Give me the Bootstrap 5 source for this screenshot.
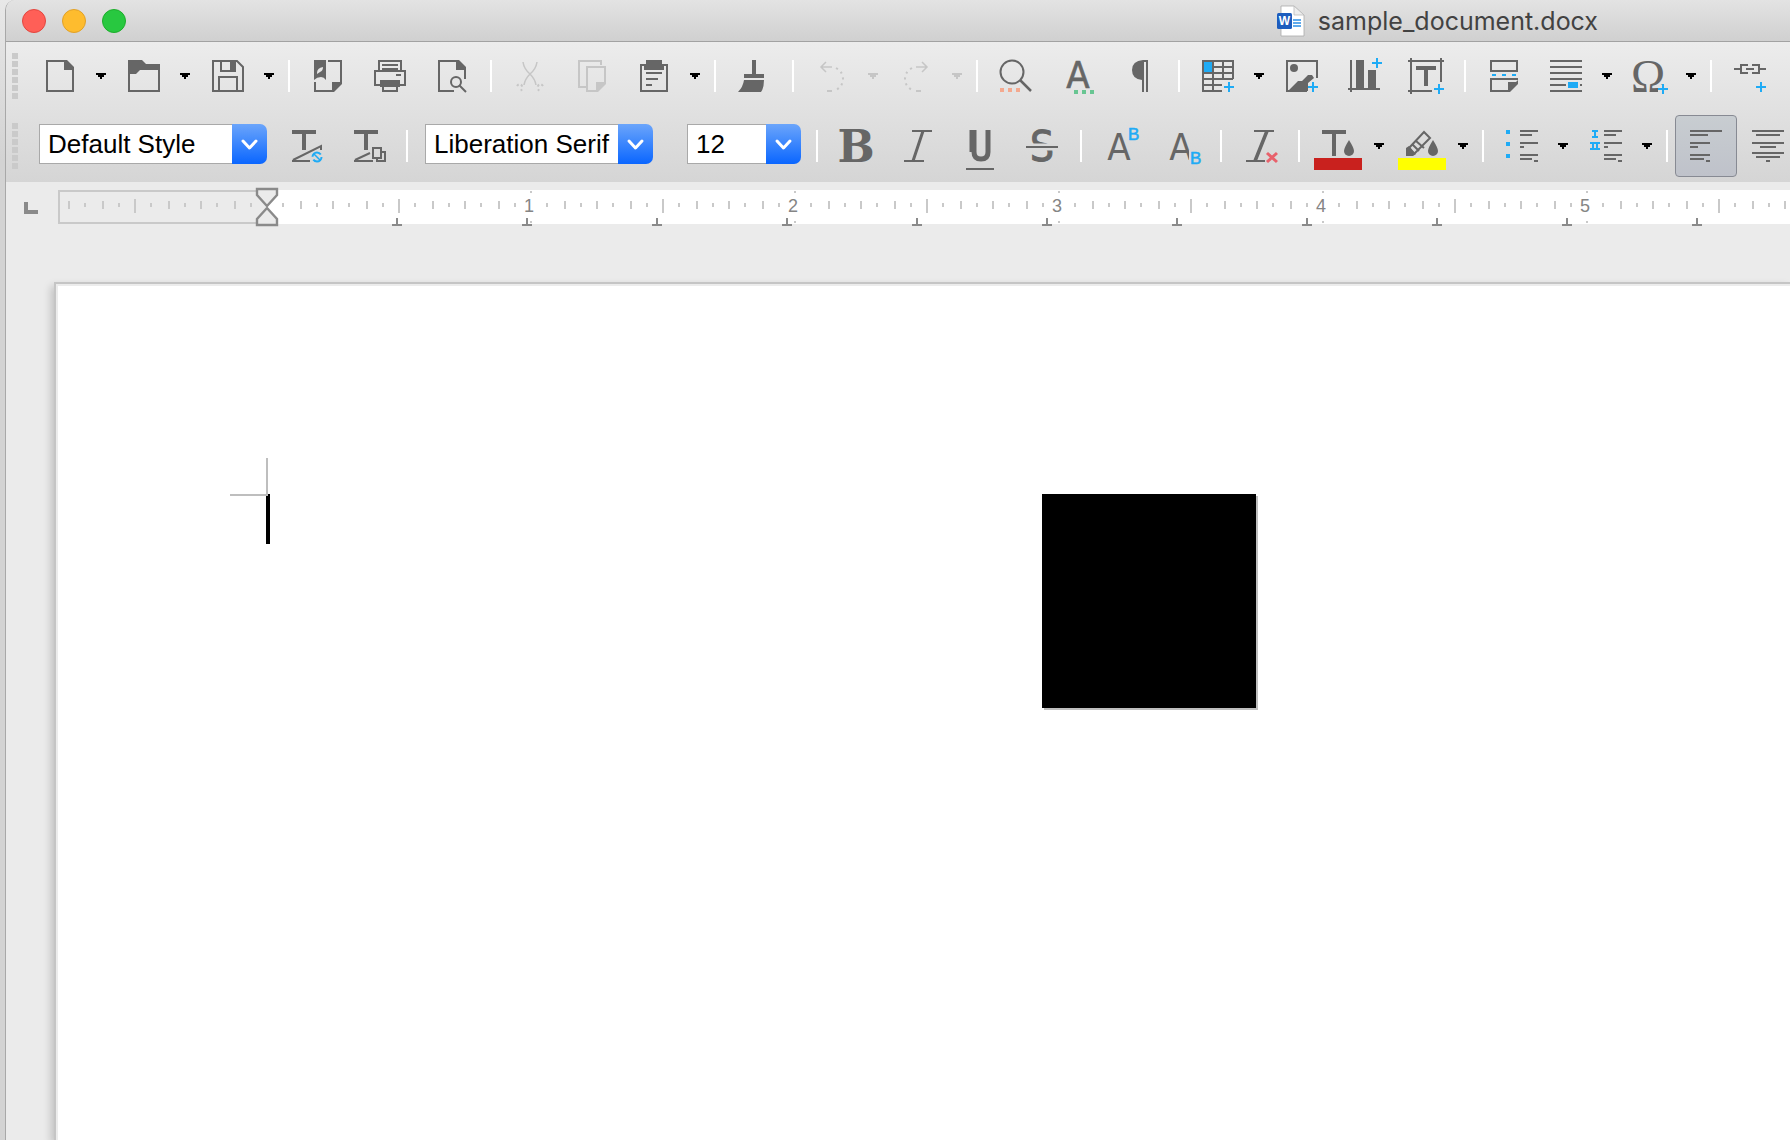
<!DOCTYPE html>
<html lang="en">
<head>
<meta charset="utf-8">
<meta name="viewport" content="width=device-width, initial-scale=1">
<title>sample_document.docx</title>
<link href="https://cdn.jsdelivr.net/npm/bootstrap@5.3.0/dist/css/bootstrap.min.css" rel="stylesheet">
<style>
:root{--ink:#666;--blue:#1fabf5;--panel:#ebebeb}
body{background:linear-gradient(#e8e8e8,#d3d3d3 160px);padding-left:5px;font-family:"Liberation Sans",Arial,sans-serif;overflow:hidden}
.win{min-height:100vh;border-left:1px solid #a8a8a8;border-top-left-radius:10px;background:var(--panel);overflow:hidden}
.titlebar{height:42px;background:linear-gradient(#e3e3e3,#d0d0d0);border-bottom:1px solid #a2a2a2;padding-left:16px;gap:16px}
.light{width:24px;height:24px;border-radius:50%;border:1px solid;padding:0}
.l-red{background:#ff5f57;border-color:#e2463f}
.l-yel{background:#febc2e;border-color:#e0a028}
.l-grn{background:#28c840;border-color:#1dad2b}
.doc-title{font-family:Inter,Roboto,sans-serif;font-size:25px;line-height:32px;color:#424242;padding-right:192px;gap:13px;white-space:nowrap}
.doc-title svg{flex:none}
.bars{background:linear-gradient(#ececec,#d5d5d5);height:140px;border-top-left-radius:8px}
.bar1{height:68px}
.bar2{height:72px}
.grip{width:6px;height:46px;margin:0 11px 0 6px;flex:none;background:repeating-linear-gradient(#cacaca 0 6px,transparent 6px 8px)}
.tb,.ar{border:1px solid transparent;background:none;padding:0;height:62px;flex:none;display:flex;align-items:center}
.tb{width:62px;justify-content:center;border-radius:4px}
.ar{width:22px}
.tb svg{width:48px;height:48px;overflow:visible;flex:none;stroke:var(--ink);fill:none;stroke-width:2}
.tb.active{background:linear-gradient(#c8cdd1,#bfc2ca);border:1px solid #878a93}
.tb .f{fill:var(--ink);stroke:none}
.tb .b{stroke:var(--blue)}
.tb .bf{fill:var(--blue);stroke:none}
.tb:disabled svg{stroke:#c6c6c6}
.tb:disabled .f{fill:#c6c6c6}
.tb text{font-family:"Liberation Sans",Arial,sans-serif;fill:var(--ink);stroke:none}
.tb .cap-a{font-family:"DejaVu Sans Condensed","DejaVu Sans",sans-serif;font-size:38px;text-anchor:middle}
.tb .cap-b{font-size:17px;fill:var(--blue);stroke:var(--blue);stroke-width:.6}
.ar svg{width:18px;height:10px;fill:#000}
.ar:disabled svg{fill:#c6c6c6}
.sep{width:2px;height:32px;margin:0 7px;background:#fff;flex:none}
.combo{flex:none;appearance:none;border:0;height:40px;width:228px;margin:0 8px 4px 10px;padding:0 36px 0 9px;font-size:26px;line-height:38px;color:#000;border-radius:0 7px 7px 0;
background:url("data:image/svg+xml,%3Csvg xmlns='http://www.w3.org/2000/svg' viewBox='0 0 35 40'%3E%3Cpath d='M11 17l6.500 7 6.500-7' fill='none' stroke='%23fff' stroke-width='3' stroke-linecap='round' stroke-linejoin='round'/%3E%3C/svg%3E") right/35px 40px no-repeat,linear-gradient(#6ba5fb,#0a66ff) right/35px 100% no-repeat,linear-gradient(#fff,#fff) 1px 1px/100% 38px no-repeat,#a9a9a9}
.combo-size{width:114px;margin-left:26px}
.ruler-row{height:44px;margin-top:8px}
.tabkind{width:52px;border:0;background:none;padding:12px 0 0 18px;flex:none;line-height:0;text-align:left}
.ruler{flex:1;height:40px;min-width:0;overflow:visible;margin-top:-2px}
.ruler text{font-size:18px;fill:#858585;text-anchor:middle;font-family:"Liberation Sans",Arial,sans-serif}
.sheet{margin:48px 0 0 48px;min-height:calc(100vh - 282px);border:solid #c5c5c5;border-width:2px 0 0 2px;box-shadow:inset 2px 2px 0 #ececec,-3px 4px 8px rgba(0,0,0,.18);background:#fff;padding:210px 0 0 210px}
.caret{width:4px;height:50px;background:#000;position:relative}
.caret::before{content:"";position:absolute;right:2px;bottom:48px;width:38px;height:38px;border:solid #bebebe;border-width:0 2px 2px 0}
.shape{width:214px;height:214px;background:#000;box-shadow:2px 2px 0 #bfbfbf;margin-left:772px}
</style>
<script src="https://cdn.jsdelivr.net/npm/bootstrap@5.3.0/dist/js/bootstrap.bundle.min.js"></script>
</head>
<body>
<div class="win">
<header class="titlebar d-flex align-items-center">
<button class="light l-red" aria-label="Close"></button>
<button class="light l-yel" aria-label="Minimize"></button>
<button class="light l-grn" aria-label="Zoom"></button>
<div class="doc-title d-flex align-items-center ms-auto">
<svg width="28" height="32" viewBox="0 0 28 32"><path d="M4 1H17L27 10V31H4z" fill="#fff" stroke="#aaa" stroke-width=".8"/><path d="M17 1V10H27z" fill="#eee" stroke="#bbb" stroke-width=".8"/><path d="M16 15h8M16 18h8M16 21h8" stroke="#2b8fe6" stroke-width="1.300"/><rect y="8" width="15" height="16" rx="1.500" fill="#1d5dbe"/><text x="7.500" y="20" font-family="Liberation Sans" font-weight="700" font-size="12" text-anchor="middle" fill="#fff">W</text></svg>
<span>sample_document.docx</span>
</div>
</header>
<div class="bars">
<div class="bar1 d-flex align-items-center" role="toolbar" aria-label="Standard">
<span class="grip"></span>
<button class="tb" aria-label="New"><svg viewBox="-24 -24 48 48"><path d="M5-15H-13V15H13V-7"/><path class="f" d="M4-16H7L14-9V-6H4z"/></svg></button><button class="ar" aria-label="New options"><svg viewBox="0 0 18 10"><path d="M4 2H14V4H12V6H10V8H8V6H6V4H4z"/></svg></button>
<button class="tb" aria-label="Open"><svg viewBox="-24 -24 48 48"><path d="M-15-8V15H15V-8"/><path class="f" d="M-16-16H-2L2-12H16V-6H-4L-8-2H-16z"/></svg></button><button class="ar" aria-label="Open options"><svg viewBox="0 0 18 10"><path d="M4 2H14V4H12V6H10V8H8V6H6V4H4z"/></svg></button>
<button class="tb" aria-label="Save"><svg viewBox="-24 -24 48 48"><path d="M9-15H-15V15H15V-9zM-7-15V-5H7V-15M-9 15V1H9V15"/><path class="f" d="M2-16H8V-5H2z"/></svg></button><button class="ar" aria-label="Save options"><svg viewBox="0 0 18 10"><path d="M4 2H14V4H12V6H10V8H8V6H6V4H4z"/></svg></button>
<span class="sep"></span>
<button class="tb" aria-label="Export as PDF"><svg viewBox="-24 -24 48 48"><path d="M0-15H13V7M-13 6V15H5"/><path class="f" d="M-14-16H-2V4Q-4 1-7 1Q-11 1-14 4zM14 6V8L6 16H4V6z"/><path d="M-11-3Q-11-8-5-9Q-5-5-8-4L-11-2" style="fill:#e8e8e8;stroke:none"/></svg></button>
<button class="tb" aria-label="Print"><svg viewBox="-24 -24 48 48"><path d="M-11-6V-15H11V-6M-8-11H8M-8-7H8M-15-5H15V9H-15zM-7 10V15H7V10M6-1h5"/><path class="f" d="M-10 4H10V11H-10zM-8-8H8V-5H-8z"/></svg></button>
<button class="tb" aria-label="Print preview"><svg viewBox="-24 -24 48 48"><path d="M5-15H-13V15H2M13-7V3"/><path class="f" d="M4-16H7L14-9V-6H4z"/><circle cx="4" cy="6" r="5"/><path d="M7 9l7 7"/></svg></button>
<span class="sep"></span>
<button class="tb" disabled aria-label="Cut"><svg viewBox="-24 -24 48 48"><path d="M-7-14Q-6-7 0-2Q5 3 6 9M7-14Q6-7 0-2Q-5 3-6 9" stroke-width="1.500"/><path stroke-dasharray="2 3" d="M-13 10Q-10 6-8 10T-11 15M13 10Q10 6 8 10T11 15"/></svg></button>
<button class="tb" disabled aria-label="Copy"><svg viewBox="-24 -24 48 48"><path d="M9-11V-15H-13V11H-6M4 15H-5V-9H13V6"/><path class="f" d="M14 6V8L6 16H4V6z"/></svg></button>
<button class="tb" aria-label="Paste"><svg viewBox="-24 -24 48 48"><path d="M-8-11H-13V15H13V-11H8M-8-3H8M-8 3H4M-8 9H-2"/><path class="f" d="M-8-16H8V-12H10V-6H-10V-12H-8z"/></svg></button><button class="ar" aria-label="Paste options"><svg viewBox="0 0 18 10"><path d="M4 2H14V4H12V6H10V8H8V6H6V4H4z"/></svg></button>
<span class="sep"></span>
<button class="tb" aria-label="Clone formatting"><svg viewBox="-24 -24 48 48"><path class="f" d="M-2-16H2V-2H10V2H-10V-2H-2zM-10 4H10Q10 12 7 16H-16Q-11 11-10 4z"/></svg></button>
<span class="sep"></span>
<button class="tb" disabled aria-label="Undo"><svg viewBox="-24 -24 48 48"><path d="M-6-14L-11-9L-6-4M-11-9H0" stroke-width="1.500"/><path stroke-dasharray="2 4" d="M4-8Q11-4 11 3T4 14"/><path d="M0 15H-5"/></svg></button><button class="ar" disabled aria-label="Undo history"><svg viewBox="0 0 18 10"><path d="M4 2H14V4H12V6H10V8H8V6H6V4H4z"/></svg></button>
<button class="tb" disabled aria-label="Redo"><svg viewBox="-24 -24 48 48"><path d="M6-14L11-9L6-4M11-9H0" stroke-width="1.500"/><path stroke-dasharray="2 4" d="M-4-8Q-11-4-11 3T-4 14"/><path d="M0 15H5"/></svg></button><button class="ar" disabled aria-label="Redo history"><svg viewBox="0 0 18 10"><path d="M4 2H14V4H12V6H10V8H8V6H6V4H4z"/></svg></button>
<span class="sep"></span>
<button class="tb" aria-label="Find and replace"><svg viewBox="-24 -24 48 48"><circle cx="-4" cy="-4" r="11.500"/><path d="M4 4L15 15" stroke-width="2.500"/><path d="M-16 12h4v4h-4zM-8 12h4v4h-4zM0 12h4v4H0z" style="fill:#f4a98f;stroke:none"/></svg></button>
<button class="tb" aria-label="Spelling"><svg viewBox="-24 -24 48 48"><text class="cap-a" x="0" y="12" style="stroke:var(--ink);stroke-width:.6">A</text><path d="M-4 14H0v4h-4zM4 14h4v4H4zM12 14h4v4h-4z" style="fill:#68c592;stroke:none"/></svg></button>
<button class="tb" aria-label="Formatting marks"><svg viewBox="-24 -24 48 48"><path class="f" d="M8-16V16H6V-14H4V16H2V4Q-8 3-8-6T3-16z"/></svg></button>
<span class="sep"></span>
<button class="tb" aria-label="Insert table"><svg viewBox="-24 -24 48 48"><path d="M4 15H-15V-15H15V3M-15-3H15M-15 3H15M-15 9H4M-15-9H15M-5-15V15M5-15V3"/><path class="bf" d="M-14-14H-6V-4H-14z"/><path class="b" d="M6 11H16M11 6V16"/></svg></button><button class="ar" aria-label="Table options"><svg viewBox="0 0 18 10"><path d="M4 2H14V4H12V6H10V8H8V6H6V4H4z"/></svg></button>
<button class="tb" aria-label="Insert image"><svg viewBox="-24 -24 48 48"><path d="M5 15H-15V-15H15V2"/><circle class="f" cx="-8" cy="-8" r="4"/><path class="f" d="M-14 15L-4 5H0L6-1H10L12 2 6 7V15z"/><path class="b" d="M6 11H16M11 6V16"/></svg></button>
<button class="tb" aria-label="Insert chart"><svg viewBox="-24 -24 48 48"><path d="M-13-16V16M-16 13H16"/><path class="f" d="M-8-16H0V13H-8zM4-6H12V13H4z"/><path class="b" d="M8-13H18M13-18V-8"/></svg></button>
<button class="tb" aria-label="Insert text box"><svg viewBox="-24 -24 48 48"><path d="M-18-15H18M-15-18V18M15-18V6M-18 15H6"/><path d="M-10-8H10M0-8V10" stroke-width="4"/><path class="b" d="M8 13H18M13 8V18"/></svg></button>
<span class="sep"></span>
<button class="tb" aria-label="Insert page break"><svg viewBox="-24 -24 48 48"><path d="M-13-15H13V-5H-13zM13 4V3H-13V15H4"/><path class="f" d="M14 4V8L6 16H4V6H12z"/><path class="b" d="M-12-1H-8M-2-1H2M8-1H12"/></svg></button>
<button class="tb" aria-label="Insert field"><svg viewBox="-24 -24 48 48"><path d="M-16-15H16M-16-9H16M-16-3H16M-16 3H16M-16 9H0M14 9H16M-16 15H16"/><path class="bf" d="M2 6H12V12H2z"/></svg></button><button class="ar" aria-label="Field options"><svg viewBox="0 0 18 10"><path d="M4 2H14V4H12V6H10V8H8V6H6V4H4z"/></svg></button>
<button class="tb" aria-label="Special character"><svg viewBox="-24 -24 48 48"><text x="-2" y="16" font-size="46" text-anchor="middle" style="font-family:'Liberation Serif',serif">Ω</text><path d="M8 9H18V18H8z" style="fill:#e3e3e3;stroke:none"/><path class="b" d="M8 13H18M13 8V18"/></svg></button><button class="ar" aria-label="Special character options"><svg viewBox="0 0 18 10"><path d="M4 2H14V4H12V6H10V8H8V6H6V4H4z"/></svg></button>
<span class="sep"></span>
<button class="tb" aria-label="Insert hyperlink"><svg viewBox="-24 -24 48 48"><path d="M-16-7H-9M-2-11H-9V-3H-2M-4-7H4M2-11H9V-3H2M9-7H16"/><path class="b" d="M6 11H16M11 6V16"/></svg></button>
</div>
<div class="bar2 d-flex align-items-center" role="toolbar" aria-label="Formatting">
<span class="grip"></span>
<select class="combo" aria-label="Paragraph style"><option>Default Style</option></select>
<button class="tb" aria-label="Update style"><svg viewBox="-24 -24 48 48"><path d="M-14-14H10M-2-14V4" stroke-width="4"/><path d="M-13 14L15 0V4M-14 15H4"/><circle class="b" cx="11" cy="11" r="4.500" stroke-dasharray="11 3"/><path class="b" d="M8 8l6 6" stroke-width="1.500"/></svg></button>
<button class="tb" aria-label="New style"><svg viewBox="-24 -24 48 48"><path d="M-14-14H10M-2-14V4" stroke-width="4"/><path d="M-13 14L2 7M-14 15H5"/><path d="M5 2H13V12H5zM13 6H17V15H9V12"/></svg></button>
<span class="sep"></span>
<select class="combo" aria-label="Font name"><option>Liberation Serif</option></select>
<select class="combo combo-size" aria-label="Font size"><option>12</option></select>
<span class="sep"></span>
<button class="tb" aria-label="Bold"><svg viewBox="-24 -24 48 48"><text y="16" font-size="44" font-weight="700" text-anchor="middle" style="font-family:'DejaVu Serif',serif">B</text></svg></button>
<button class="tb" aria-label="Italic"><svg viewBox="-24 -24 48 48"><path d="M-6-15H14M-14 15H6"/><path d="M5-15L-5 15" stroke-width="3"/></svg></button>
<button class="tb" aria-label="Underline"><svg viewBox="-24 -24 48 48"><path d="M-14 23H14"/><path d="M-6-16V6Q-6 13 1 13Q8 13 8 6V-16" stroke-width="5"/><path d="M-8-16V6" stroke-width="5"/></svg></button>
<button class="tb" aria-label="Strikethrough"><svg viewBox="-24 -24 48 48"><text y="15" font-size="42" text-anchor="middle" style="font-family:'DejaVu Sans Condensed','DejaVu Sans',sans-serif;stroke:var(--ink);stroke-width:1">S</text><path d="M-16 1H16" stroke="#dadada" stroke-width="7"/><path d="M-16 1H16"/></svg></button>
<span class="sep"></span>
<button class="tb" aria-label="Superscript"><svg viewBox="-24 -24 48 48"><text class="cap-a" x="-1" y="14">A</text><text class="cap-b" x="8" y="-6">B</text></svg></button>
<button class="tb" aria-label="Subscript"><svg viewBox="-24 -24 48 48"><text class="cap-a" x="-1" y="14">A</text><path d="M7 4H19V18H7z" style="fill:#d9d9d9;stroke:none"/><text class="cap-b" x="8" y="18">B</text></svg></button>
<span class="sep"></span>
<button class="tb" aria-label="Clear formatting"><svg viewBox="-24 -24 48 48"><path d="M-6-15H14M-14 15H5"/><path d="M7-15L-5 15" stroke-width="3.500"/><path d="M7 7L17 16M17 7L7 16" stroke-width="3" style="stroke:#e8616b"/></svg></button>
<span class="sep"></span>
<button class="tb" aria-label="Font color"><svg viewBox="-24 -24 48 48"><path d="M-16-14H8M-4-14V10" stroke-width="4"/><path class="f" d="M11-6Q16 2 16 5A5 5 0 0 1 6 5Q6 2 11-6z"/><path d="M-24 12H24V24H-24z" style="fill:#c9211e;stroke:none"/></svg></button><button class="ar" aria-label="Font color options"><svg viewBox="0 0 18 10"><path d="M4 2H14V4H12V6H10V8H8V6H6V4H4z"/></svg></button>
<button class="tb" aria-label="Highlight color"><svg viewBox="-24 -24 48 48"><path d="M-13 2L2-14L8-8L-8 8M-6-5L2 2M-9-1L-3 5M-13 2L-8 8"/><path class="f" d="M-16 2L-13 0L-6 8L-9 10H-16zM11-6Q16 2 16 5A5 5 0 0 1 6 5Q6 2 11-6z"/><path d="M-24 12H24V24H-24z" style="fill:#ff0;stroke:none"/></svg></button><button class="ar" aria-label="Highlight color options"><svg viewBox="0 0 18 10"><path d="M4 2H14V4H12V6H10V8H8V6H6V4H4z"/></svg></button>
<span class="sep"></span>
<button class="tb" aria-label="Bulleted list"><svg viewBox="-24 -24 48 48"><path class="bf" d="M-16-16h4v4h-4zM-16-4h4v4h-4zM-16 8h4v4h-4z"/><path d="M-2-15H16M-2-11H10M-2-3H16M-2 1H2M-2 9H16M-2 13H10M12 15H16"/></svg></button><button class="ar" aria-label="Bullet options"><svg viewBox="0 0 18 10"><path d="M4 2H14V4H12V6H10V8H8V6H6V4H4z"/></svg></button>
<button class="tb" aria-label="Numbered list"><svg viewBox="-24 -24 48 48"><path class="b" d="M-14-15h6M-14-9h6M-11-15v6M-16-3h10M-16 3h10M-13-3v6M-9-3v6"/><path d="M-2-15H16M-2-11H10M-2-3H16M-2 1H2M-2 9H16M-2 13H10M12 15H16"/></svg></button><button class="ar" aria-label="Numbering options"><svg viewBox="0 0 18 10"><path d="M4 2H14V4H12V6H10V8H8V6H6V4H4z"/></svg></button>
<span class="sep"></span>
<button class="tb active" aria-label="Align left" aria-pressed="true"><svg viewBox="-24 -24 48 48"><path d="M-16-15H16M-16-11H2M-16-3H4M-16 1H-8M-16 9H4M-16 13H-2M0 15H4"/></svg></button>
<button class="tb" aria-label="Align center"><svg viewBox="-24 -24 48 48"><path d="M-16-15H16M-12-11H12M-16-3H16M-8 1H8M-16 7H16M-12 11H12M-2 15H2"/></svg></button>
</div>
</div>
<div class="ruler-row d-flex align-items-start">
<button class="tabkind" aria-label="Tab stop type"><svg width="14" height="12"><path d="M2 0V10H14" fill="none" stroke="#8a8a8a" stroke-width="4"/></svg></button>
<svg class="ruler" role="img" aria-label="Ruler">
<defs>
<pattern id="ticks" x="209" y="0" width="264" height="40" patternUnits="userSpaceOnUse"><path fill="#c9c9c9" d="M0 3h1v2h-1zM263 3h1v2h-1zM0 33h1v2h-1zM263 33h1v2h-1zM15 15h2v4h-2zM49 15h2v4h-2zM81 15h2v4h-2zM115 15h2v4h-2zM147 15h2v4h-2zM181 15h2v4h-2zM213 15h2v4h-2zM247 15h2v4h-2zM33 13h2v8h-2zM65 13h2v8h-2zM99 13h2v8h-2zM165 13h2v8h-2zM197 13h2v8h-2zM231 13h2v8h-2zM131 11h2v14h-2z"/></pattern>
<pattern id="tabs" x="274" y="0" width="130" height="40" patternUnits="userSpaceOnUse"><path fill="#8a8a8a" d="M64 30h2v6h-2zM60 36h10v2h-10z"/></pattern>
</defs>
<path d="M209 3H1V35H209" fill="none" stroke="#c9c9c9" stroke-width="2"/>
<rect x="209" y="2" width="100%" height="34" fill="#fff"/>
<rect x="8" y="0" width="100%" height="40" fill="url(#ticks)"/>
<rect x="274" y="0" width="100%" height="40" fill="url(#tabs)"/>
<text x="471" y="24">1</text><text x="735" y="24">2</text><text x="999" y="24">3</text><text x="1263" y="24">4</text><text x="1527" y="24">5</text>
<path d="M199 1H219V7L209 18L199 7zM209 20L199 31V37H219V31z" fill="#ebebeb" stroke="#8a8a8a" stroke-width="2.400"/>
</svg>
</div>
<main class="sheet d-flex align-items-start">
<div class="caret"></div>
<div class="shape"></div>
</main>
</div>
</body>
</html>
